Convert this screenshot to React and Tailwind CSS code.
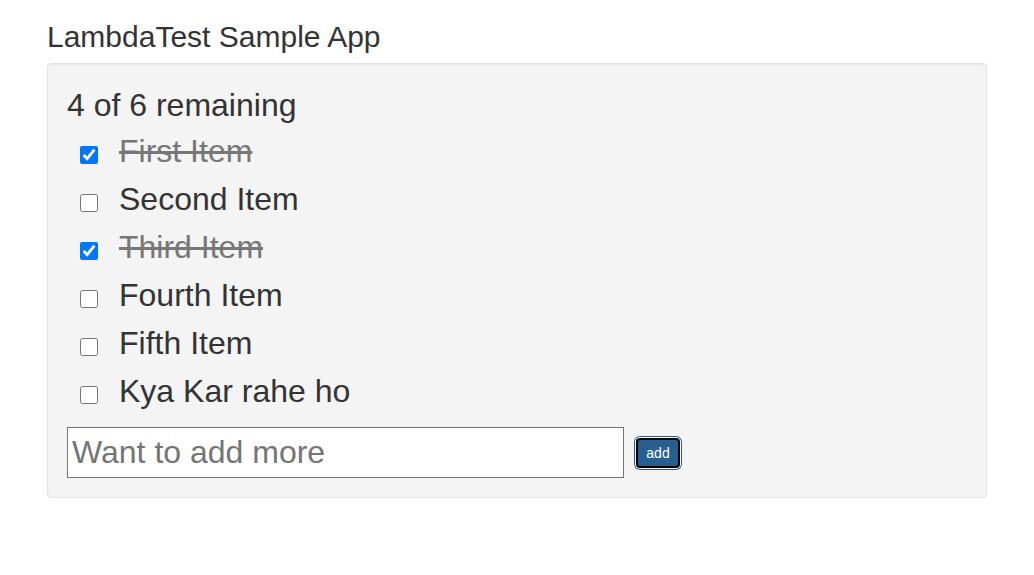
import { useState } from "react";

const initialItems = [
    { id: 1, text: "First Item", done: true },
    { id: 2, text: "Second Item", done: false },
    { id: 3, text: "Third Item", done: true },
    { id: 4, text: "Fourth Item", done: false },
    { id: 5, text: "Fifth Item", done: false },
    { id: 6, text: "Kya Kar rahe ho", done: false },
];

const TodoRow = ({ item, onToggle }) => {
    return (
        <li className="flex items-center h-[48px]">
            <input
                type="checkbox"
                checked={item.done}
                onChange={() => onToggle(item.id)}
                className="w-[18px] h-[18px] ml-[13px] mt-[5px] accent-[#0075ff]"
            />
            <span className={`ml-[21px] -mt-[2px] ${item.done ? 'line-through text-[#777]' : 'text-[#333]'}`}>{item.text}</span>
        </li>
    );
};

const App = () => {
    const [items, setItems] = useState(initialItems);
    const [text, setText] = useState("");

    const remaining = items.filter(i => !i.done).length;

    const toggle = (id) => {
        setItems(items.map(i => i.id == id ? { ...i, done: !i.done } : i));
    };

    const addItem = () => {
        if (!text.trim()) return;
        setItems([...items, { id: Date.now(), text, done: false }]);
        setText("");
    };

    return (
        <div className="min-h-screen bg-white text-[#333] font-['Liberation_Sans',Arial,sans-serif]">
            <div className="w-[940px] mx-auto pt-[20px]">
                <h2 className="text-[30px] leading-[33px] mb-[10px]">LambdaTest Sample App</h2>

                <div className="bg-[#f4f4f4] border border-[#e3e3e3] rounded-[4px] p-[19px] shadow-[inset_0_1px_1px_rgba(0,0,0,0.05)]">
                    <p className="text-[32px] leading-[45px]">{remaining} of {items.length} remaining</p>
                    <ul className="text-[32px] leading-[40px]">
                        {items.map(item => <TodoRow key={item.id} item={item} onToggle={toggle} />)}
                    </ul>
                    <div className="flex items-center mt-[11px]">
                        <input
                            type="text"
                            value={text}
                            onChange={e => setText(e.target.value)}
                            placeholder="Want to add more"
                            className="w-[557px] h-[51px] bg-white border border-[#767676] px-[4px] text-[32px] text-[#333] placeholder:text-[#757575] outline-none"
                        />
                        <button
                            onClick={addItem}
                            className="ml-[12px] w-[44px] h-[30px] bg-[#285f91] border-2 border-black rounded-[4px] text-white text-[14px] leading-none ring-1 ring-[#285f91] ring-offset-1 ring-offset-white"
                        >
                            add
                        </button>
                    </div>
                </div>
            </div>
        </div>
    );
};

export default App;
